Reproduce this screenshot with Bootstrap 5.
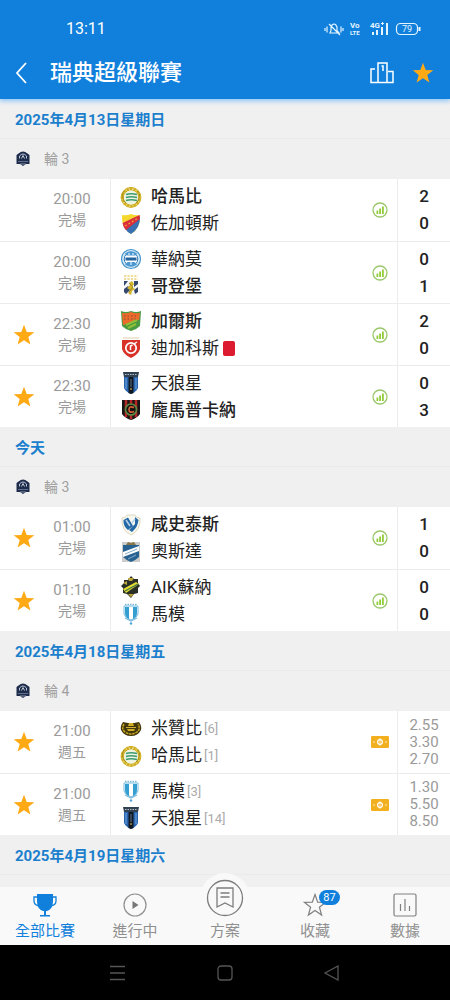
<!DOCTYPE html>
<html lang="zh-Hant">
<head>
<meta charset="utf-8">
<meta name="viewport" content="width=device-width, initial-scale=1">
<title>瑞典超級聯賽</title>
<link href="https://cdn.jsdelivr.net/npm/bootstrap@5.3.0/dist/css/bootstrap.min.css" rel="stylesheet">
<style>
:root { --brand: #1080dc; --pane: #f0f0f0; --rule: #ececec; --soft: #9a9a9a; --gold: #ffa914; }
body { font-family: Roboto, "Noto Sans CJK TC", sans-serif; color: #222; background: var(--pane); }
svg { display: block; flex: none; }
.app-top { background: var(--brand); color: #fff; box-shadow: 0 1px 5px 1px #8cc4f6; z-index: 2; }
.status-line { height: 57px; padding: 0 28px 0 66px; font-size: 16px; }
.title-line { height: 42px; padding: 0 16px 10px 12px; }
.title-line h1 { font-size: 22px; line-height: 30px; font-weight: 500; }
.plain-btn { border: 0; background: none; padding: 0; color: inherit; }
.match-scroll { min-height: 0; overflow-y: auto; scrollbar-width: none; }
.match-scroll::-webkit-scrollbar { display: none; }
.day-head { height: 40px; margin: 0; padding: 2px 15px 0; font-size: 15px; font-weight: 700; color: #1b7fcd; border-bottom: 1px solid #eaeaea; }
.round-head { height: 40px; margin: 0; padding: 0 15px; font-size: 14px; font-weight: 400; color: #a0a0a0; gap: 13px; }
.match { height: 62px; background: #fff; }
.match + .match { border-top: 1px solid var(--rule); }
.fav { width: 48px; color: var(--gold); }
.kickoff { width: 62px; padding-right: 14px; font-size: 15px; line-height: 21px; color: var(--soft); }
.kickoff small { font-size: 14px; display: block; }
.sides { padding-left: 9px; border-left: 1px solid var(--rule); font-size: 17px; line-height: 27px; }
.side { height: 27px; gap: 9px; }
.won { font-weight: 500; }
.seed { font-size: 13px; color: #aaa; margin-left: -7px; }
.red-card { width: 12px; height: 15px; border-radius: 2px; background: #dc1a30; margin-left: -5px; }
.extra { width: 35px; }
.score { width: 53px; border-left: 1px solid var(--rule); font-size: 17px; font-weight: 500; line-height: 27px; }
.odds { font-size: 15px; font-weight: 400; line-height: 17px; color: var(--soft); }
.tabs { height: 58px; background: #f9f9f9; }
.tab { color: #909090; font-size: 15px; line-height: 20px; text-decoration: none; position: relative; }
.tab .glyph { height: 34px; padding-top: 2px; }
.tab.on { color: var(--brand); }
.bump { position: absolute; top: -14px; left: 50%; margin-left: -25px; width: 50px; height: 50px; border-radius: 50%; background: #f9f9f9; }
.count { position: absolute; top: 3px; left: 50%; margin-left: 4px; width: 21px; height: 15px; border-radius: 8px; background: var(--brand); color: #fff; font-size: 11px; line-height: 15px; }
.system-bar { height: 55px; background: #000; color: #555; }
</style>
</head>
<body>
<svg width="0" height="0" class="position-absolute" aria-hidden="true">
  <symbol id="star" viewBox="0 0 22 22"><path fill="currentColor" d="M11 .8l2.7 7.2 7.6.3-6 4.7 2.1 7.5L11 16.200l-6.400 4.300 2.100-7.500-6-4.700 7.600-.3z"/></symbol>
  <symbol id="stats" viewBox="0 0 16 16"><circle cx="8" cy="8" r="7" fill="none" stroke="#9ac76a" stroke-width="1.300"/><path fill="#92cc38" d="M4.500 8.500h1.800v3.500H4.500zM7.200 6.500H9V12H7.200zM10 4.500h1.800V12H10z"/></symbol>
  <symbol id="pitch" viewBox="0 0 18 12"><rect width="18" height="12" rx="1.200" fill="#f2b01e"/><path d="M9 2v8M3 5v2M15 5v2" fill="none" stroke="#fbe3a4" stroke-width="1.200"/><circle cx="9" cy="6" r="2.400" fill="none" stroke="#fff" stroke-width="1.200"/></symbol>
  <symbol id="league" viewBox="0 0 16 16"><path fill="#1e2c4c" d="M3.500 2.500Q8-1.300 12.500 2.500l2 1.500v9H11l-3 2-3-2H1.500V4z"/><path fill="none" stroke="#cfd6e4" stroke-width=".9" d="M4.500 7.500V5Q8 1 11.500 5v2.500M6.500 7.500L8 4.500l1.500 3"/><path stroke="#7482a0" stroke-width=".8" d="M3 10.500h10"/><path stroke="#aab4c6" stroke-width=".8" d="M5 13h6"/></symbol>
  <symbol id="hammarby" viewBox="0 0 22 22"><circle cx="11" cy="11.500" r="8.700" fill="none" stroke="#cfae22" stroke-width="3.400"/><circle cx="11" cy="11.500" r="8.700" fill="none" stroke="#e8d46a" stroke-width="1.500" stroke-dasharray="1.500 2"/><circle cx="11" cy="11.500" r="7" fill="#eef3df"/><path fill="#fff" d="M8 0h6l-1.500 4h-3z"/><path fill="#cfae22" d="M8.500 1h5L12 4h-2z"/><path d="M6 8.500q5-1.500 11 0M6 11.500q5-1.500 11 0M6 14.500q5-1.500 11 0" fill="none" stroke="#3b9b72" stroke-width="1.700"/><path d="M4 5q-4 7 2 12M18 5q4 7-2 12" fill="none" stroke="#8e7c16" stroke-width=".7"/></symbol>
  <symbol id="djurgarden" viewBox="0 0 22 22"><path fill="#f5d72d" d="M2 2q4 1 9-1 5 2 9 1 1 13-9 19Q1 15 2 2z"/><path fill="#3870b3" d="M20 3q.5 12-9 18-4-2-6.500-6z"/><path fill="#d92f3a" d="M2.500 10L19.500 2l.5 4L6 17q-3-3-3.500-7z"/><path stroke="#f0a03e" stroke-width="1.200" stroke-dasharray="2 2" d="M5 13l12.500-7.500"/></symbol>
  <symbol id="varnamo" viewBox="0 0 22 22"><circle cx="11" cy="11" r="9.500" fill="#d7ebf8" stroke="#4795ca" stroke-width="1.200"/><circle cx="11" cy="11" r="6.800" fill="#fff" stroke="#2e7ab5"/><path fill="#4a98d2" d="M5 5.500q6-4.500 12 0l-1.500 2h-9zM5 16.500q6 4.500 12 0L14.500 14h-7z"/><path fill="#24659e" d="M5.500 9.500h11v3h-11z"/><path stroke="#fff" d="M8 6h2m2 0h2M11 14v3"/></symbol>
  <symbol id="goteborg" viewBox="0 0 22 22"><path stroke="#e9d17c" stroke-width="1.300" stroke-dasharray="2.200 1.200" d="M4 1h14M4 4h14"/><path fill="#f6f6f4" d="M4 6h14v11q-3 1-7 4-4-3-7-4z"/><path fill="#35496f" d="M4 6h4L4 11zM14 6h4v3l-4 3zM4 14l4-3 3 3-5 5-2-2zM14 15l4-3v5l-3 2z"/><path fill="#d5b52d" d="M12 6l2 3-2 3 3 2-3 2-1 4-3-2 2-3-3-2 3-3-1-2z"/><path stroke="#86802c" fill="none" stroke-width=".8" d="M9 8l4 4-4 5"/></symbol>
  <symbol id="gais" viewBox="0 0 22 22"><path fill="#499b42" d="M1 1q5 2 10 0 5 2 10 0l-1 15q-4 4-9 5-5-1-9-5z"/><path fill="#ed6a2c" d="M2 3q5 1 9-1 4 2 9 1l-1 7L3 15z"/><path stroke="#a35a30" stroke-width="1.300" stroke-dasharray="1.500 2" d="M4 6h14M4 9h12"/><path stroke="#91be37" stroke-width="2" d="M6 15l11-5M8 18l8-4"/></symbol>
  <symbol id="degerfors" viewBox="0 0 22 22"><path stroke="#ddd1a8" d="M3 1h16"/><path fill="#d83128" d="M2 3h18v9q-2 6-9 9-7-3-9-9z"/><circle cx="11" cy="11" r="5.200" fill="none" stroke="#fff" stroke-width="1.700"/><path stroke="#fff" stroke-width="1.500" fill="none" d="M14 7l3-2M10.500 13V9l2-1"/></symbol>
  <symbol id="sirius" viewBox="0 0 22 22"><path fill="#314150" d="M3 0h16l-1 5H4z"/><path stroke="#b0bdc9" stroke-dasharray="1.500 1" d="M5 2.500h12"/><path fill="#2864ae" d="M4 5h14v11q-2 4-7 6-5-2-7-6z"/><path fill="#101922" d="M8.500 5h5v16L11 22l-2.500-1z"/><path stroke="#75a8de" d="M6 6v11M16 6v11"/><path stroke="#5e7489" d="M11 7v8"/><circle cx="11" cy="17" r="1" fill="#a98a4a"/></symbol>
  <symbol id="brommapojkarna" viewBox="0 0 22 22"><path fill="#1a1515" d="M2 1h18v14q-3 4-9 6-6-2-9-6z"/><path stroke="#b52727" stroke-width="2.500" d="M6 1v17M16 1v17M11 1v19"/><circle cx="11" cy="10.500" r="5.500" fill="#17130f" stroke="#5d8a44" stroke-width="1.600"/><path fill="none" stroke="#dc5f3b" stroke-width="1.600" d="M14 8.500q-5-2-5 2t5 2"/></symbol>
  <symbol id="halmstad" viewBox="0 0 22 22"><path fill="#f7f7f2" stroke="#ded9bb" d="M2 4q4 0 5-3h8q1 3 5 3 1 12-9 17Q1 16 2 4z"/><path fill="#2469a5" d="M3.500 6L8 3.500 13 12l-5 4Q3 12 3.500 6zM15 3l3.500 3Q18 13 12 18l-3-2 6-6z"/><path stroke="#b9d2e6" stroke-width="1.500" fill="none" d="M6 6l4 6M15 5l-3 4"/></symbol>
  <symbol id="oster" viewBox="0 0 22 22"><path fill="#cccdca" d="M2 1h18v20H2z"/><path fill="#8a7749" d="M6 4l2-3 3 1 3-1 2 3z"/><path fill="#276291" d="M3 4h16v12q-3 3-8 5-5-2-8-5z"/><path fill="#fff" d="M3 11l16-6v5L3 16z"/><path stroke="#87adc9" d="M5 13l12-5M8 18l8-4"/></symbol>
  <symbol id="aik" viewBox="0 0 22 22"><path fill="#292f26" d="M11 0l3 3h4v4l2 3-2 2v5l-4 1-3 4-4-4-4-1v-5l-2-2 3-3V4h4z"/><path fill="#bba637" d="M8 2h6l-2 3H9zM3 7l4-2v4zM14 18l-3 3-3-3z"/><path fill="#e1dc31" d="M3 13L16 6l3 2L6 17z"/><path stroke="#45724b" stroke-width="1.300" d="M5 15l13-7"/></symbol>
  <symbol id="malmo" viewBox="0 0 22 22"><path stroke="#7fb8d5" stroke-width="1.500" stroke-dasharray="1.500 1" d="M5 1.500h12"/><path fill="#fff" stroke="#72bbdd" d="M4 3h14v8q-1 4-7 6-6-2-7-6z"/><path fill="#349ed0" d="M5 4h4v12q-4-2-4-6zM13 4h4v6q0 4-4 6z"/><path fill="none" stroke="#7bb9dc" stroke-width="1.300" d="M5 15l6 3 6-3"/><circle cx="11" cy="20.500" r="1.200" fill="#4aa3d7"/></symbol>
  <symbol id="mjallby" viewBox="0 0 22 22"><path fill="#43370d" d="M3 4l5 1h6l5-1q3 4 2 8-3 6-10 6T1 12Q0 8 3 4z"/><path fill="none" stroke="#c9a920" stroke-width="1.500" stroke-dasharray="2.500 .8" d="M4 6q-3 5 1 8 6 4 12 0 4-3 1-8"/><path fill="#d0ae25" d="M9 5h4l1 3H8zM7 11h8l-1 2H8z"/><path fill="none" stroke="#cfb135" d="M6 9.500h10"/></symbol>
</svg>

<div class="vh-100 d-flex flex-column">
  <header class="app-top position-relative flex-shrink-0">
    <div class="status-line d-flex align-items-center justify-content-between">
      <span>13:11</span>
      <svg width="100" height="18" viewBox="0 0 100 18" fill="none" stroke="#e5f5ff" stroke-width="1.200" aria-hidden="true">
        <path d="M3 8v3M5 6.500v6M19 6.500v6M21 8v3M8 13h9L15 10.500V7q-1-3-3-3T9 7v3.500zM7 4l11 11"/>
        <g fill="#e5f5ff" stroke="none" font-family="Roboto, sans-serif" font-weight="700">
          <text x="28" y="8" font-size="8">Vo</text><text x="28" y="15" font-size="6">LTE</text>
          <text x="48" y="8" font-size="8">4G</text><path d="M59 3h3v1h-3zM60 2h1v3h-1zM50 12h2v3h-2zM54 10h2v5h-2zM59 7h2v8h-2zM64 3h2v12h-2z"/>
          <text x="80" y="12" font-size="9" font-weight="400">79</text>
        </g>
        <rect x="74.500" y="3.500" width="21" height="11" rx="4"/><path d="M97.500 7v4" stroke-width="2"/>
      </svg>
    </div>
    <div class="title-line d-flex align-items-center">
      <button class="plain-btn" type="button" aria-label="返回"><svg width="38" height="24" viewBox="0 0 38 24" fill="none" stroke="#fff" stroke-width="1.800"><path d="M14 2L5 12l9 10"/></svg></button>
      <h1 class="m-0 flex-grow-1">瑞典超級聯賽</h1>
      <button class="plain-btn me-3" type="button" aria-label="排名"><svg width="26" height="24" viewBox="0 0 26 24" fill="none" stroke="#fff" stroke-width="1.500"><path d="M5 8H1v13.500h22V10.500h-5M8 21.500V2h9v19.500M11.500 5h1.500v5"/></svg></button>
      <button class="plain-btn" type="button" aria-label="收藏聯賽" style="color:var(--gold)"><svg width="22" height="22"><use href="#star"/></svg></button>
    </div>
  </header>

  <main class="match-scroll flex-grow-1">
    <section>
      <h2 class="day-head d-flex align-items-center">2025年4月13日星期日</h2>
      <h3 class="round-head d-flex align-items-center"><svg width="16" height="16"><use href="#league"/></svg>輪 3</h3>
      <article class="match d-flex align-items-stretch">
        <div class="fav"></div>
        <div class="kickoff d-flex flex-column justify-content-center text-center">20:00<small>完場</small></div>
        <div class="sides flex-grow-1 d-flex flex-column justify-content-center">
          <div class="side d-flex align-items-center won"><svg width="22" height="22"><use href="#hammarby"/></svg>哈馬比</div>
          <div class="side d-flex align-items-center"><svg width="22" height="22"><use href="#djurgarden"/></svg>佐加頓斯</div>
        </div>
        <div class="extra d-flex align-items-center justify-content-center"><svg width="16" height="16"><use href="#stats"/></svg></div>
        <div class="score d-flex flex-column justify-content-center text-center"><span>2</span><span>0</span></div>
      </article>
      <article class="match d-flex align-items-stretch">
        <div class="fav"></div>
        <div class="kickoff d-flex flex-column justify-content-center text-center">20:00<small>完場</small></div>
        <div class="sides flex-grow-1 d-flex flex-column justify-content-center">
          <div class="side d-flex align-items-center"><svg width="22" height="22"><use href="#varnamo"/></svg>華納莫</div>
          <div class="side d-flex align-items-center won"><svg width="22" height="22"><use href="#goteborg"/></svg>哥登堡</div>
        </div>
        <div class="extra d-flex align-items-center justify-content-center"><svg width="16" height="16"><use href="#stats"/></svg></div>
        <div class="score d-flex flex-column justify-content-center text-center"><span>0</span><span>1</span></div>
      </article>
      <article class="match d-flex align-items-stretch">
        <button class="fav plain-btn d-flex align-items-center justify-content-center" type="button" aria-label="取消收藏"><svg width="22" height="22"><use href="#star"/></svg></button>
        <div class="kickoff d-flex flex-column justify-content-center text-center">22:30<small>完場</small></div>
        <div class="sides flex-grow-1 d-flex flex-column justify-content-center">
          <div class="side d-flex align-items-center won"><svg width="22" height="22"><use href="#gais"/></svg>加爾斯</div>
          <div class="side d-flex align-items-center"><svg width="22" height="22"><use href="#degerfors"/></svg>迪加科斯<span class="red-card"></span></div>
        </div>
        <div class="extra d-flex align-items-center justify-content-center"><svg width="16" height="16"><use href="#stats"/></svg></div>
        <div class="score d-flex flex-column justify-content-center text-center"><span>2</span><span>0</span></div>
      </article>
      <article class="match d-flex align-items-stretch">
        <button class="fav plain-btn d-flex align-items-center justify-content-center" type="button" aria-label="取消收藏"><svg width="22" height="22"><use href="#star"/></svg></button>
        <div class="kickoff d-flex flex-column justify-content-center text-center">22:30<small>完場</small></div>
        <div class="sides flex-grow-1 d-flex flex-column justify-content-center">
          <div class="side d-flex align-items-center"><svg width="22" height="22"><use href="#sirius"/></svg>天狼星</div>
          <div class="side d-flex align-items-center won"><svg width="22" height="22"><use href="#brommapojkarna"/></svg>龐馬普卡納</div>
        </div>
        <div class="extra d-flex align-items-center justify-content-center"><svg width="16" height="16"><use href="#stats"/></svg></div>
        <div class="score d-flex flex-column justify-content-center text-center"><span>0</span><span>3</span></div>
      </article>
    </section>

    <section>
      <h2 class="day-head d-flex align-items-center">今天</h2>
      <h3 class="round-head d-flex align-items-center"><svg width="16" height="16"><use href="#league"/></svg>輪 3</h3>
      <article class="match d-flex align-items-stretch">
        <button class="fav plain-btn d-flex align-items-center justify-content-center" type="button" aria-label="取消收藏"><svg width="22" height="22"><use href="#star"/></svg></button>
        <div class="kickoff d-flex flex-column justify-content-center text-center">01:00<small>完場</small></div>
        <div class="sides flex-grow-1 d-flex flex-column justify-content-center">
          <div class="side d-flex align-items-center won"><svg width="22" height="22"><use href="#halmstad"/></svg>咸史泰斯</div>
          <div class="side d-flex align-items-center"><svg width="22" height="22"><use href="#oster"/></svg>奧斯達</div>
        </div>
        <div class="extra d-flex align-items-center justify-content-center"><svg width="16" height="16"><use href="#stats"/></svg></div>
        <div class="score d-flex flex-column justify-content-center text-center"><span>1</span><span>0</span></div>
      </article>
      <article class="match d-flex align-items-stretch">
        <button class="fav plain-btn d-flex align-items-center justify-content-center" type="button" aria-label="取消收藏"><svg width="22" height="22"><use href="#star"/></svg></button>
        <div class="kickoff d-flex flex-column justify-content-center text-center">01:10<small>完場</small></div>
        <div class="sides flex-grow-1 d-flex flex-column justify-content-center">
          <div class="side d-flex align-items-center"><svg width="22" height="22"><use href="#aik"/></svg>AIK蘇納</div>
          <div class="side d-flex align-items-center"><svg width="22" height="22"><use href="#malmo"/></svg>馬模</div>
        </div>
        <div class="extra d-flex align-items-center justify-content-center"><svg width="16" height="16"><use href="#stats"/></svg></div>
        <div class="score d-flex flex-column justify-content-center text-center"><span>0</span><span>0</span></div>
      </article>
    </section>

    <section>
      <h2 class="day-head d-flex align-items-center">2025年4月18日星期五</h2>
      <h3 class="round-head d-flex align-items-center"><svg width="16" height="16"><use href="#league"/></svg>輪 4</h3>
      <article class="match d-flex align-items-stretch">
        <button class="fav plain-btn d-flex align-items-center justify-content-center" type="button" aria-label="取消收藏"><svg width="22" height="22"><use href="#star"/></svg></button>
        <div class="kickoff d-flex flex-column justify-content-center text-center">21:00<small>週五</small></div>
        <div class="sides flex-grow-1 d-flex flex-column justify-content-center">
          <div class="side d-flex align-items-center"><svg width="22" height="22"><use href="#mjallby"/></svg>米贊比<span class="seed">[6]</span></div>
          <div class="side d-flex align-items-center"><svg width="22" height="22"><use href="#hammarby"/></svg>哈馬比<span class="seed">[1]</span></div>
        </div>
        <div class="extra d-flex align-items-center justify-content-center"><svg width="18" height="12"><use href="#pitch"/></svg></div>
        <div class="score odds d-flex flex-column justify-content-center text-center"><span>2.55</span><span>3.30</span><span>2.70</span></div>
      </article>
      <article class="match d-flex align-items-stretch">
        <button class="fav plain-btn d-flex align-items-center justify-content-center" type="button" aria-label="取消收藏"><svg width="22" height="22"><use href="#star"/></svg></button>
        <div class="kickoff d-flex flex-column justify-content-center text-center">21:00<small>週五</small></div>
        <div class="sides flex-grow-1 d-flex flex-column justify-content-center">
          <div class="side d-flex align-items-center"><svg width="22" height="22"><use href="#malmo"/></svg>馬模<span class="seed">[3]</span></div>
          <div class="side d-flex align-items-center"><svg width="22" height="22"><use href="#sirius"/></svg>天狼星<span class="seed">[14]</span></div>
        </div>
        <div class="extra d-flex align-items-center justify-content-center"><svg width="18" height="12"><use href="#pitch"/></svg></div>
        <div class="score odds d-flex flex-column justify-content-center text-center"><span>1.30</span><span>5.50</span><span>8.50</span></div>
      </article>
    </section>

    <section>
      <h2 class="day-head d-flex align-items-center">2025年4月19日星期六</h2>
      <h3 class="round-head d-flex align-items-center"><svg width="16" height="16"><use href="#league"/></svg></h3>
    </section>
  </main>

  <nav class="tabs row row-cols-5 g-0 text-center flex-shrink-0" aria-label="主選單">
    <a class="tab on col" href="#"><span class="glyph d-flex align-items-center justify-content-center">
      <svg width="24" height="26" viewBox="0 0 24 26"><path fill="currentColor" d="M4 2h16v7q0 8-6 10h-1v4h4v1.500H7V23h4v-4h-1Q4 17 4 9z"/><path fill="none" stroke="currentColor" stroke-width="1.300" d="M5 5H1v4q0 4 5 5M19 5h4v4q0 4-5 5"/></svg></span>全部比賽</a>
    <a class="tab col" href="#"><span class="glyph d-flex align-items-center justify-content-center">
      <svg width="24" height="24" viewBox="0 0 24 24"><circle cx="12" cy="12" r="11" fill="none" stroke="currentColor" stroke-width="1.200"/><path fill="#777" d="M9.500 8l6 4-6 4z"/></svg></span>進行中</a>
    <a class="tab col" href="#"><span class="bump d-flex align-items-center justify-content-center">
      <svg width="38" height="38" viewBox="0 0 38 38" fill="none" stroke="#7d7d7d" stroke-width="1.300"><circle cx="19" cy="19" r="17.500"/><path d="M11 9h16v19l-8-4-8 4zM14.500 14h9M14.500 18h9"/></svg></span><span class="glyph d-block"></span>方案</a>
    <a class="tab col" href="#"><span class="glyph d-flex align-items-center justify-content-center">
      <svg width="24" height="24" viewBox="0 0 24 24"><path fill="none" stroke="#808080" stroke-width="1.200" d="M12 1.500l2.700 7.600 8 .2-6.300 4.900 2.200 7.800-6.600-4.500L5.400 22l2.200-7.800-6.300-4.900 8-.2z"/></svg></span><span class="count">87</span>收藏</a>
    <a class="tab col" href="#"><span class="glyph d-flex align-items-center justify-content-center">
      <svg width="24" height="24" viewBox="0 0 24 24" fill="none" stroke="#808080" stroke-width="1.200"><rect x="1" y="1" width="22" height="22" rx="1.500"/><path d="M7.500 11v7M12 6v12M16.500 13v5"/></svg></span>數據</a>
  </nav>
  <div class="system-bar d-flex align-items-center justify-content-center flex-shrink-0">
    <svg width="230" height="16" viewBox="0 0 230 16" fill="none" stroke="currentColor" stroke-width="1.300" aria-hidden="true"><path d="M0 1.500h15M0 8h15M0 14.500h15M215 8l13-7v14z"/><rect x="108" y="1" width="14" height="14" rx="3"/></svg>
  </div>
</div>
<script src="https://cdn.jsdelivr.net/npm/bootstrap@5.3.0/dist/js/bootstrap.bundle.min.js"></script>
</body>
</html>
